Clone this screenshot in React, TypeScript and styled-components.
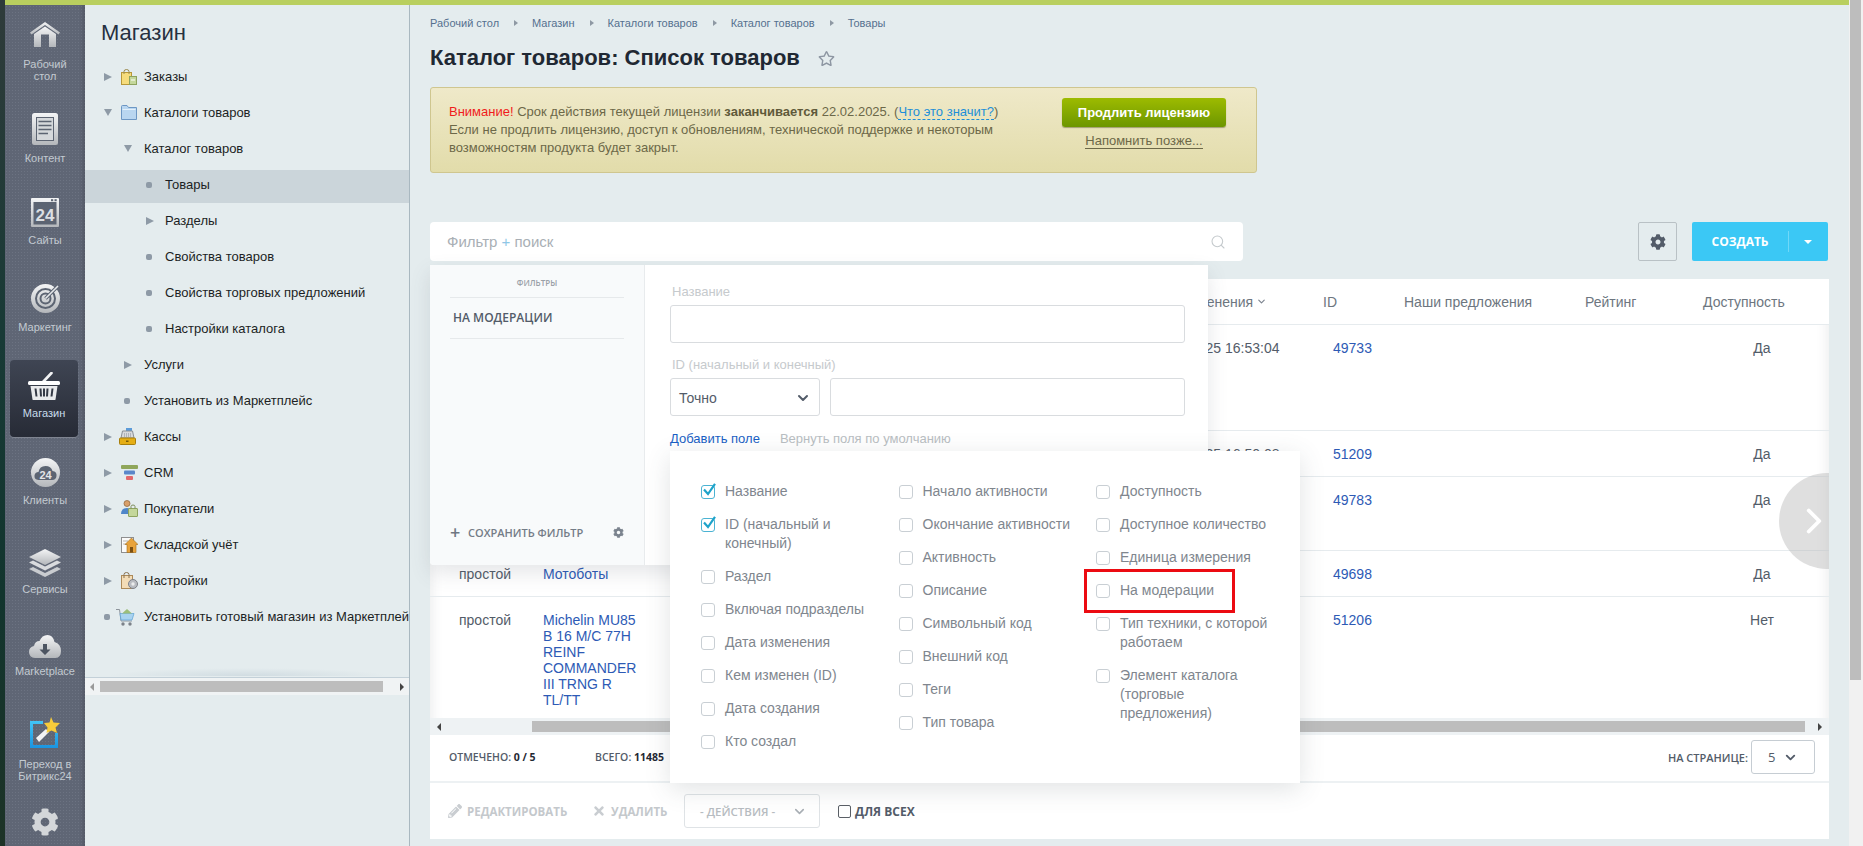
import React from "react"
import styled, { createGlobalStyle } from "styled-components"
import { FaCog, FaPencilAlt, FaRegStar, FaTimes } from "react-icons/fa"
import { ChevronDown, ChevronRight, Search } from "lucide-react"

const GlobalStyle = createGlobalStyle`
  * { box-sizing: border-box; }
  html, body { margin: 0; padding: 0; height: 100%; overflow: hidden; }
  body { font-family: "Liberation Sans", Arial, sans-serif; background: #e4ecee; }
`

const Metal = ({ id }: { id: string }) => (
  <defs>
    <linearGradient id={id} x1="0" y1="0" x2="0" y2="1">
      <stop offset="0" stopColor="#f4f5f6" />
      <stop offset="1" stopColor="#b4b7bb" />
    </linearGradient>
  </defs>
)

const HomeIcon = () => (
  <svg width="30" height="25" viewBox="0 0 30 25">
    <Metal id="m1" />
    <path d="M15 0 30 10.5 28.5 12.5 15 3 1.500 12.500 0 10.500Z" fill="url(#m1)" />
    <path d="M4 12 15 4.500 26 12V25H19V12.500H11V25H4Z" fill="url(#m1)" />
  </svg>
)

const ContentIcon = () => (
  <svg width="26" height="32" viewBox="0 0 26 32">
    <Metal id="m2" />
    <rect width="26" height="32" rx="2.500" fill="url(#m2)" />
    <rect x="4" y="4" width="18" height="24" fill="#5c6472" />
    <rect x="5" y="5" width="16" height="22" fill="#d5d8db" />
    <path d="M6.500 8.500H19.500M6.500 12.500H19.500M6.500 16.500H19.500M6.500 20.500H16" stroke="#5c6472" strokeWidth="1.600" />
  </svg>
)

const SitesIcon = () => (
  <svg width="28" height="29" viewBox="0 0 28 29">
    <Metal id="m3" />
    <rect width="28" height="29" rx="1" fill="url(#m3)" />
    <rect x="2.500" y="4" width="23" height="22.500" fill="#5c6472" />
    <rect x="20" y="1.200" width="2.200" height="2" fill="#5c6472" />
    <rect x="23.500" y="1.200" width="2.200" height="2" fill="#5c6472" />
    <text x="14" y="23" textAnchor="middle" fontFamily="Liberation Sans" fontWeight="700" fontSize="17" fill="#dcdfe2">24</text>
  </svg>
)

const TargetIcon = () => (
  <svg width="29" height="29" viewBox="0 0 29 29">
    <Metal id="m4" />
    <circle cx="14.500" cy="14.500" r="14.500" fill="url(#m4)" />
    <circle cx="14.500" cy="14.500" r="9.500" fill="none" stroke="#5c6472" strokeWidth="2" />
    <circle cx="14.500" cy="14.500" r="5" fill="none" stroke="#5c6472" strokeWidth="2" />
    <path d="M14.500 14.500 26 3" stroke="#5c6472" strokeWidth="3.500" />
    <path d="M14.500 14.500 27 2" stroke="#e6e8ea" strokeWidth="1.600" />
  </svg>
)

const BasketIcon = () => (
  <svg width="32" height="28" viewBox="0 0 32 28">
    <path d="M15 10 23.500 1" stroke="#f2f3f4" strokeWidth="2.600" strokeLinecap="round" />
    <rect y="9" width="32" height="4" rx="1.500" fill="#fff" />
    <path d="M2.500 14H29.500L27.500 27.500Q27.400 28 26.500 28H5.500Q4.600 28 4.500 27.500Z" fill="#e9eaec" />
    <path d="M7.500 16.500 8.500 24.500M12.500 16.500 13 24.500M19.500 16.500 19 24.500M24.500 16.500 23.500 24.500M16 16.500V24.500" stroke="#343945" strokeWidth="2" />
  </svg>
)

const CloudCircleIcon = () => (
  <svg width="29" height="29" viewBox="0 0 29 29">
    <Metal id="m6" />
    <circle cx="14.500" cy="14.500" r="14.500" fill="url(#m6)" />
    <path d="M7.500 22Q3 21.500 3.500 17.500 4 14 7.500 14 8.500 8 14.500 8 20 8 21.500 13 26 13.500 25.500 18 25 22 21 22Z" fill="#5c6472" />
    <text x="14.500" y="20.500" textAnchor="middle" fontFamily="Liberation Sans" fontWeight="700" fontSize="11" fill="#e3e5e7">24</text>
  </svg>
)

const LayersIcon = () => (
  <svg width="32" height="28" viewBox="0 0 32 28">
    <Metal id="m7" />
    <path d="M16 0 32 8 16 16 0 8Z" fill="url(#m7)" />
    <path d="M4 11.500 16 17.500 28 11.500 32 13.500 16 21.500 0 13.500Z" fill="#d9dbde" />
    <path d="M4 18 16 24 28 18 32 20 16 28 0 20Z" fill="#c9ccd0" />
  </svg>
)

const CloudDownIcon = () => (
  <svg width="32" height="23" viewBox="0 0 32 23">
    <Metal id="m8" />
    <path d="M6 23Q0 22.500 0 17 0 12 5 11 6 6 10.500 6 13 0 18.500 0 24 0 25.500 7 32 9 32 16 32 22.500 26.500 23Z" fill="url(#m8)" />
    <path d="M14 9H18V14.500H21.500L16 20 10.500 14.500H14Z" fill="#4c5461" />
  </svg>
)

const WandIcon = () => (
  <svg width="32" height="32" viewBox="0 0 32 32">
    <defs>
      <linearGradient id="m9" x1="0" y1="0" x2="0" y2="1">
        <stop offset="0" stopColor="#43c4f5" />
        <stop offset="1" stopColor="#1a94e0" />
      </linearGradient>
    </defs>
    <path d="M1 4H14V7H4V28H26V16H29V31H1Z" fill="url(#m9)" />
    <path d="M7 21 17 12 20 15 10 25Z" fill="#f2f3f4" />
    <path d="M22 0 24.500 5.500 31 6 26.500 10.500 28 16 22.500 13.500 17.500 16 18.500 10.500 15 6 20.500 5.500Z" fill="#f7cc3a" />
  </svg>
)

const OrdersIcon = () => (
  <svg width="16" height="16" viewBox="0 0 16 16">
    <rect x="0.500" y="3.500" width="10" height="12" fill="#f6dc7c" stroke="#b8993a" />
    <path d="M3 5V2.500Q3 .5 5.500 .5 8 .5 8 2.500V5" fill="none" stroke="#9a8a4e" />
    <rect x="8.500" y="7.500" width="7" height="8" fill="#c4d79b" stroke="#8ea35f" />
    <path d="M10 11H14" stroke="#fff" />
  </svg>
)

const FolderIcon = () => (
  <svg width="16" height="15" viewBox="0 0 16 15">
    <path d="M.5 14.500V1.500Q.5.500 1.500.500H6L7.500 2.500H15.500V14.500Z" fill="#b9d6f0" stroke="#6d97c4" />
    <path d="M1.500 4.500H14.500" stroke="#e3f0fb" />
  </svg>
)

const CashIcon = () => (
  <svg width="17" height="17" viewBox="0 0 17 17">
    <rect x="7" y="0" width="6" height="3" fill="#5c9bd8" />
    <path d="M3.500 3H13.500L15 10H2Z" fill="#d8dadd" stroke="#8a8f96" />
    <path d="M5 6H12M5 8H12" stroke="#8a8f96" strokeDasharray="1 1" />
    <rect x="0.500" y="10" width="16" height="6.500" rx="1" fill="#e5ae15" stroke="#a77f0c" />
    <rect x="7" y="12.500" width="2.500" height="1.500" fill="#7a5c05" />
  </svg>
)

const CrmIcon = () => (
  <svg width="17" height="15" viewBox="0 0 17 15">
    <rect width="17" height="4" rx="1" fill="#8fa65a" />
    <rect x="3" y="5.500" width="11" height="4" rx="1" fill="#5b87c9" />
    <rect x="5" y="11" width="7" height="4" rx="1" fill="#e2686b" />
  </svg>
)

const BuyersIcon = () => (
  <svg width="17" height="17" viewBox="0 0 17 17">
    <circle cx="6" cy="3.500" r="3" fill="#d9a06b" stroke="#8a6034" strokeWidth=".7" />
    <path d="M0 14Q0 8 6 8 11 8 11 14Z" fill="#4f86c9" />
    <rect x="7.500" y="8.500" width="9" height="8" rx=".5" fill="#c4d79b" stroke="#8ea35f" />
    <path d="M10 8.500V6.500Q10 5 12 5 14 5 14 6.500V8.500" fill="none" stroke="#7d8c5a" />
  </svg>
)

const WarehouseIcon = () => (
  <svg width="17" height="17" viewBox="0 0 17 17">
    <rect x="0.500" y="1.500" width="12" height="15" fill="#fbfbfa" stroke="#8f8f8f" />
    <path d="M2 5H7M2 8H6" stroke="#b5b5b5" />
    <path d="M10.500 2 17 8.500H15V16.500H6V8.500H4Z" fill="#e8a33b" stroke="#a26c18" strokeWidth=".6" />
    <rect x="9" y="11" width="3" height="5.500" fill="#7a4f12" />
  </svg>
)

const SettingsShopIcon = () => (
  <svg width="17" height="17" viewBox="0 0 17 17">
    <rect x="0.500" y="3.500" width="11" height="13" fill="#f3dcb6" stroke="#ad8a58" />
    <path d="M3 6V2.500Q3 .5 5.500 .5 8 .5 8 2.500V6" fill="none" stroke="#8a7250" />
    <circle cx="12" cy="12" r="4.500" fill="#b9bcc1" stroke="#7d8087" />
    <circle cx="12" cy="12" r="1.700" fill="#eceded" />
  </svg>
)

const CartIcon = () => (
  <svg width="19" height="18" viewBox="0 0 19 18">
    <path d="M0 1.500H3.500L5 13H16" fill="none" stroke="#8e959c" />
    <path d="M4 5.500H18L16 12H5Z" fill="#a9d3f0" stroke="#5ba2d6" strokeWidth=".7" />
    <path d="M6 5.500 11 1 16 5.500Z" fill="#9cbe7a" />
    <circle cx="7" cy="16" r="1.700" fill="#7c8289" />
    <circle cx="14" cy="16" r="1.700" fill="#7c8289" />
  </svg>
)

const CheckMark = () => (
  <svg width="16" height="16" viewBox="0 0 16 16">
    <path d="M3 6.500 7 11 14 0.800" fill="none" stroke="#1ea3ca" strokeWidth="2.200" />
  </svg>
)

const nav = [
  { label: "Рабочий стол", icon: <HomeIcon />, h: 90, pt: 17, gap: 11 },
  { label: "Контент", icon: <ContentIcon />, h: 90, pt: 18, gap: 7 },
  { label: "Сайты", icon: <SitesIcon />, h: 85, pt: 13, gap: 7 },
  { label: "Маркетинг", icon: <TargetIcon />, h: 85, pt: 14, gap: 8 },
  { label: "Магазин", icon: <BasketIcon />, h: 77, pt: 12, gap: 7, active: true },
  { label: "Клиенты", icon: <CloudCircleIcon />, h: 93, pt: 21, gap: 7 },
  { label: "Сервисы", icon: <LayersIcon />, h: 90, pt: 19, gap: 6 },
  { label: "Marketplace", icon: <CloudDownIcon />, h: 85, pt: 15, gap: 7 },
  { label: "Переход в Битрикс24", icon: <WandIcon />, h: 90, pt: 12, gap: 9 },
]

type MenuEntry = {
  label: string
  marker: "right" | "down" | "dot"
  level: number
  icon?: React.ReactNode
  slot?: number
  active?: boolean
}

const menu: MenuEntry[] = [
  { label: "Заказы", marker: "right", level: 0, icon: <OrdersIcon />, slot: 23 },
  { label: "Каталоги товаров", marker: "down", level: 0, icon: <FolderIcon />, slot: 23 },
  { label: "Каталог товаров", marker: "down", level: 1 },
  { label: "Товары", marker: "dot", level: 2, active: true },
  { label: "Разделы", marker: "right", level: 2 },
  { label: "Свойства товаров", marker: "dot", level: 2 },
  { label: "Свойства торговых предложений", marker: "dot", level: 2 },
  { label: "Настройки каталога", marker: "dot", level: 2 },
  { label: "Услуги", marker: "right", level: 1 },
  { label: "Установить из Маркетплейс", marker: "dot", level: 1 },
  { label: "Кассы", marker: "right", level: 0, icon: <CashIcon />, slot: 25 },
  { label: "CRM", marker: "right", level: 0, icon: <CrmIcon />, slot: 23 },
  { label: "Покупатели", marker: "right", level: 0, icon: <BuyersIcon />, slot: 23 },
  { label: "Складской учёт", marker: "right", level: 0, icon: <WarehouseIcon />, slot: 23 },
  { label: "Настройки", marker: "right", level: 0, icon: <SettingsShopIcon />, slot: 23 },
  { label: "Установить готовый магазин из Маркетплейс", marker: "dot", level: 0, icon: <CartIcon />, slot: 28 },
]

const crumbs = ["Рабочий стол", "Магазин", "Каталоги товаров", "Каталог товаров", "Товары"]

const fieldColumns = [
  [
    { label: "Название", checked: true },
    { label: "ID (начальный и конечный)", checked: true },
    { label: "Раздел" },
    { label: "Включая подразделы" },
    { label: "Дата изменения" },
    { label: "Кем изменен (ID)" },
    { label: "Дата создания" },
    { label: "Кто создал" },
  ],
  [
    { label: "Начало активности" },
    { label: "Окончание активности" },
    { label: "Активность" },
    { label: "Описание" },
    { label: "Символьный код" },
    { label: "Внешний код" },
    { label: "Теги" },
    { label: "Тип товара" },
  ],
  [
    { label: "Доступность" },
    { label: "Доступное количество" },
    { label: "Единица измерения" },
    { label: "На модерации", marked: true },
    { label: "Тип техники, с которой работаем" },
    { label: "Элемент каталога (торговые предложения)" },
  ],
]

const rows = [
  { h: 106, date: "10.02.2025 16:53:04", id: "49733", avail: "Да" },
  { h: 46, date: "10.02.2025 16:50:08", id: "51209", avail: "Да" },
  { h: 74, date: "", id: "49783", avail: "Да" },
  { h: 46, type: "простой", name: "Мотоботы", date: "", id: "49698", avail: "Да" },
  { h: 121, type: "простой", name: "Michelin MU85 B 16 M/C 77H REINF COMMANDER III TRNG R TL/TT", date: "", id: "51206", avail: "Нет", last: true },
]

export default function App() {
  return (
    <Page>
      <GlobalStyle />
      <Wallpaper />
      <Shell>
        <GreenBar />
        <Body>
          <Sidebar>
            {nav.map(({ label, icon, h, pt, gap, active }) => (
              <NavItem key={label} $h={h} $pt={pt} $gap={gap} $active={active}>
                {icon}
                <NavLabel $active={active}>{label}</NavLabel>
              </NavItem>
            ))}
            <NavItem $h={51} $pt={13} $gap={0}>
              <FaCog size={28} color="#d3d6d9" />
            </NavItem>
          </Sidebar>
          <MenuPanel>
            <MenuTitle>Магазин</MenuTitle>
            <MenuList>
              {menu.map(({ label, marker, level, icon, slot, active }) => (
                <MenuRow key={label} $active={active}>
                  <MarkerSlot $level={level} $narrow={slot === 28}>
                    <Marker $kind={marker} />
                  </MarkerSlot>
                  {icon && <IconSlot $w={slot}>{icon}</IconSlot>}
                  <span>{label}</span>
                </MenuRow>
              ))}
            </MenuList>
            <MenuScroll>
              <ScrollArrow $dir="left" $light />
              <MenuThumb />
              <ScrollArrow $dir="right" />
            </MenuScroll>
          </MenuPanel>
          <Main>
            <Breadcrumbs>
              {crumbs.map((c, i) => (
                <Crumb key={c} $first={i === 0}>
                  {c}
                </Crumb>
              ))}
            </Breadcrumbs>
            <TitleRow>
              <Title>Каталог товаров: Список товаров</Title>
              <FaRegStar size={17} color="#8d96a2" />
            </TitleRow>
            <Banner>
              <BannerText>
                <Warn>Внимание!</Warn> Срок действия текущей лицензии <b>заканчивается</b> 22.02.2025. (
                <Hint>Что это значит?</Hint>)<br />
                Если не продлить лицензию, доступ к обновлениям, технической поддержке и некоторым
                <br />
                возможностям продукта будет закрыт.
              </BannerText>
              <BannerActions>
                <RenewButton>Продлить лицензию</RenewButton>
                <Later>Напомнить позже...</Later>
              </BannerActions>
            </Banner>
            <Toolbar>
              <SearchBox>
                <Placeholder>
                  Фильтр <i>+</i> поиск
                </Placeholder>
                <Search size={16} color="#c5cacd" strokeWidth={1.6} />
                <FilterPopup>
                  <SavedPane>
                    <PaneCaption>Фильтры</PaneCaption>
                    <SavedItem>На модерации</SavedItem>
                    <SaveRow>
                      <PlusMark>+</PlusMark>
                      <span>Сохранить фильтр</span>
                      <FaCog size={11} color="#7b838e" />
                    </SaveRow>
                  </SavedPane>
                  <FormPane>
                    <FieldLabel>Название</FieldLabel>
                    <TextInput />
                    <FieldLabel $spaced>ID (начальный и конечный)</FieldLabel>
                    <RangeRow>
                      <SelectBox>
                        Точно
                        <ChevronDown size={16} strokeWidth={3} color="#535c69" />
                      </SelectBox>
                      <TextInput />
                    </RangeRow>
                    <LinksRow>
                      <AddLink>Добавить поле</AddLink>
                      <ResetLink>Вернуть поля по умолчанию</ResetLink>
                    </LinksRow>
                  </FormPane>
                  <FieldsPopup>
                    {fieldColumns.map((col, i) => (
                      <FieldColumn key={i}>
                        {col.map(({ label, checked, marked }: any) => (
                          <FieldItem key={label} $marked={marked}>
                            <Box $checked={checked}>{checked && <CheckMark />}</Box>
                            <FieldText>{label}</FieldText>
                          </FieldItem>
                        ))}
                      </FieldColumn>
                    ))}
                  </FieldsPopup>
                </FilterPopup>
              </SearchBox>
              <GearButton>
                <FaCog size={16} color="#535c69" />
              </GearButton>
              <CreateButton>
                <CreateLabel>Создать</CreateLabel>
                <CreateCaret />
              </CreateButton>
            </Toolbar>
            <Card>
              <TableArea>
                <HeadRow>
                  <HeadCell />
                  <HeadCell />
                  <HeadCell $pad={7}>
                    Дата изменения <ChevronDown size={11} strokeWidth={2.500} color="#7b838e" />
                  </HeadCell>
                  <HeadCell>ID</HeadCell>
                  <HeadCell>Наши предложения</HeadCell>
                  <HeadCell>Рейтинг</HeadCell>
                  <HeadCell>Доступность</HeadCell>
                </HeadRow>
                {rows.map((r) => (
                  <DataRow key={r.id} $h={r.h} $last={r.last}>
                    <TypeCell>{r.type}</TypeCell>
                    <NameCell>{r.name}</NameCell>
                    <DateCell>{r.date}</DateCell>
                    <IdCell>{r.id}</IdCell>
                    <span />
                    <span />
                    <AvailCell>{r.avail}</AvailCell>
                  </DataRow>
                ))}
                <NextCircle>
                  <ChevronRight size={42} color="#fff" strokeWidth={2.200} />
                </NextCircle>
              </TableArea>
              <TableScroll>
                <ScrollArrow $dir="left" />
                <TableThumb />
                <ScrollArrow $dir="right" />
              </TableScroll>
              <Footer>
                <Stat>
                  Отмечено: <b>0 / 5</b>
                </Stat>
                <Stat>
                  Всего: <b>11485</b>
                </Stat>
                <PerPage>
                  На странице:
                  <PerPageSelect>
                    5
                    <ChevronDown size={15} strokeWidth={3} color="#535c69" />
                  </PerPageSelect>
                </PerPage>
              </Footer>
              <Actions>
                <ActionLink $w={144}>
                  <FaPencilAlt size={14} color="#c9cdd1" />
                  Редактировать
                </ActionLink>
                <ActionLink $w={92}>
                  <FaTimes size={14} color="#c9cdd1" />
                  Удалить
                </ActionLink>
                <ActionSelect>
                  - Действия -
                  <ChevronDown size={15} strokeWidth={2.500} color="#a9afb5" />
                </ActionSelect>
                <ForAll>
                  <PlainBox />
                  Для всех
                </ForAll>
              </Actions>
            </Card>
          </Main>
        </Body>
      </Shell>
      <PageScroll>
        <PageThumb />
      </PageScroll>
    </Page>
  )
}

const Page = styled.div`
  display: flex;
  width: 1863px;
  height: 846px;
  overflow: hidden;
`

const Wallpaper = styled.div`
  width: 5px;
  background: linear-gradient(180deg, #2f3b3a 0%, #183a36 40%, #12352e 70%, #1d3327 100%);
`

const Shell = styled.div`
  flex: 1;
  display: flex;
  flex-direction: column;
  min-width: 0;
`

const GreenBar = styled.div`
  height: 5px;
  background: #b9cf5f;
`

const Body = styled.div`
  flex: 1;
  display: flex;
  min-height: 0;
  background: #e4ecee;
`

const Sidebar = styled.nav`
  width: 80px;
  flex-shrink: 0;
  background-color: #5f6675;
  background-image: radial-gradient(#6c7382 0.8px, transparent 1px);
  background-size: 3px 3px;
  box-shadow: inset -5px 0 5px -4px rgba(0, 0, 0, 0.2);
`

const NavItem = styled.div<{ $h: number; $pt: number; $gap: number; $active?: boolean }>`
  display: flex;
  flex-direction: column;
  align-items: center;
  gap: ${(p) => p.$gap}px;
  height: ${(p) => p.$h}px;
  padding-top: ${(p) => p.$pt}px;
  ${(p) =>
    p.$active &&
    `
    width: 68px;
    margin: 5px 0 0 5px;
    border-radius: 4px;
    background: linear-gradient(180deg, #3f4553 0%, #272b36 100%);
    box-shadow: 0 1px 0 rgba(255, 255, 255, 0.2);
  `}
  svg { flex-shrink: 0; }
`

const NavLabel = styled.div<{ $active?: boolean }>`
  width: 64px;
  font-size: 11px;
  line-height: 12px;
  text-align: center;
  color: ${(p) => (p.$active ? "#c8dcec" : "#c3cad1")};
`

const MenuPanel = styled.div`
  width: 325px;
  flex-shrink: 0;
  border-right: 1px solid #a9b8c0;
  background: #e4ecee;
`

const MenuTitle = styled.div`
  padding: 14px 0 0 16px;
  height: 57px;
  font-size: 22px;
  line-height: 28px;
  color: #263040;
`

const MenuList = styled.div`
  height: 614px;
  overflow: hidden;
  display: flex;
  flex-direction: column;
  gap: 3px;
  background: radial-gradient(ellipse 140px 8px at 50% 100%, rgba(130, 155, 175, 0.2), transparent);
`

const MenuRow = styled.div<{ $active?: boolean }>`
  display: flex;
  align-items: center;
  flex-shrink: 0;
  height: 33px;
  padding-bottom: 4px;
  white-space: nowrap;
  font-size: 13px;
  color: #1c1f24;
  background: ${(p) => (p.$active ? "#cbd5da" : "transparent")};
`

const MarkerSlot = styled.div<{ $level: number; $narrow?: boolean }>`
  flex-shrink: 0;
  display: flex;
  align-items: center;
  margin-left: ${(p) => [19, 39, 61][p.$level]}px;
  width: ${(p) => (p.$narrow ? 12 : [17, 20, 19][p.$level])}px;
`

const Marker = styled.i<{ $kind: string }>`
  display: block;
  ${(p) =>
    p.$kind === "dot"
      ? `
    width: 6px; height: 6px; border-radius: 2px; background: #8e9aa6;
  `
      : p.$kind === "down"
      ? `
    border-style: solid; border-width: 7px 4.500px 0; border-color: #8e9aa6 transparent transparent;
  `
      : `
    border-style: solid; border-width: 4.750px 0 4.750px 8px; border-color: transparent transparent transparent #8e9aa6;
  `}
`

const IconSlot = styled.div<{ $w?: number }>`
  flex-shrink: 0;
  display: flex;
  align-items: center;
  width: ${(p) => p.$w}px;
  margin-left: ${(p) => (p.$w === 25 ? -2 : 0)}px;
`

const MenuScroll = styled.div`
  display: flex;
  align-items: center;
  height: 18px;
  margin-top: 1px;
  border-top: 1px solid #c3d0d8;
  padding: 0 5px;
  background: #f0f3f4;
`

const MenuThumb = styled.div`
  width: 283px;
  height: 11px;
  margin: 0 auto 0 6px;
  background: #bdbdbd;
`

const ScrollArrow = styled.i<{ $dir: "left" | "right"; $light?: boolean }>`
  display: block;
  border-style: solid;
  border-width: ${(p) => (p.$dir === "left" ? "4px 4px 4px 0" : "4px 0 4px 4px")};
  border-color: transparent;
  ${(p) => (p.$dir === "left" ? "border-right-color" : "border-left-color")}: ${(p) => (p.$light ? "#9a9a9a" : "#444")};
`

const Main = styled.main`
  flex: 1;
  min-width: 0;
  padding: 11px 20px 0;
`

const Breadcrumbs = styled.div`
  display: flex;
  height: 14px;
  align-items: center;
`

const Crumb = styled.span<{ $first?: boolean }>`
  font-size: 11px;
  color: #55708f;
  position: relative;
  margin-left: ${(p) => (p.$first ? 0 : 33)}px;
  ${(p) =>
    !p.$first &&
    `
    &::before {
      content: "";
      position: absolute;
      left: -18px;
      top: 3px;
      border-style: solid;
      border-width: 3.500px 0 3.500px 4px;
      border-color: transparent transparent transparent #8e98a3;
    }
  `}
`

const TitleRow = styled.div`
  display: flex;
  align-items: center;
  gap: 18px;
  height: 26px;
  margin-top: 15px;
`

const Title = styled.h1`
  margin: 0;
  font-size: 22px;
  font-weight: 700;
  color: #1f2833;
`

const Banner = styled.div`
  display: flex;
  justify-content: space-between;
  width: 827px;
  height: 86px;
  margin-top: 16px;
  padding: 0 30px 0 18px;
  border: 1px solid #cfc68f;
  border-radius: 3px;
  background: linear-gradient(180deg, #efe9c9 0%, #e2dcaa 100%);
`

const BannerText = styled.div`
  padding-top: 15px;
  font-size: 13px;
  line-height: 18px;
  color: #6c6848;
  white-space: nowrap;
  b { color: #5f5a3a; }
`

const Warn = styled.span`
  color: #f01c1c;
`

const Hint = styled.span`
  color: #1e8fd8;
  border-bottom: 1px dashed #1e8fd8;
`

const BannerActions = styled.div`
  display: flex;
  flex-direction: column;
  align-items: center;
  width: 164px;
  padding-top: 10px;
`

const RenewButton = styled.div`
  width: 164px;
  height: 29px;
  line-height: 29px;
  border-radius: 3px;
  text-align: center;
  font-size: 13px;
  font-weight: 700;
  color: #fff;
  background: linear-gradient(180deg, #9dbb00 0%, #6c9600 100%);
  box-shadow: 0 1px 1px rgba(90, 90, 40, 0.5);
`

const Later = styled.span`
  margin-top: 6px;
  font-size: 13px;
  line-height: 15px;
  color: #6c6848;
  border-bottom: 1px solid #6c6848;
`

const Toolbar = styled.div`
  display: flex;
  align-items: stretch;
  height: 39px;
  margin-top: 49px;
`

const SearchBox = styled.div`
  position: relative;
  z-index: 2;
  display: flex;
  align-items: center;
  justify-content: space-between;
  width: 813px;
  padding: 0 17px;
  border-radius: 4px;
  background: #fff;
`

const Placeholder = styled.span`
  font-size: 15px;
  color: #a9afb5;
  i { font-style: normal; color: #8fc6e6; }
`

const FilterPopup = styled.div`
  position: absolute;
  left: 0;
  top: calc(100% + 4px);
  display: flex;
  width: 778px;
  height: 300px;
  background: #fff;
  border-radius: 0 0 4px 4px;
  box-shadow: 0 8px 20px rgba(80, 90, 100, 0.15);
`

const SavedPane = styled.div`
  display: flex;
  flex-direction: column;
  width: 215px;
  padding: 13px 20px 26px;
  border-right: 1px solid #e8ebed;
  background: #f8fafb;
  border-radius: 0 0 0 4px;
`

const PaneCaption = styled.div`
  height: 20px;
  line-height: 10px;
  border-bottom: 1px solid #e6e9eb;
  text-align: center;
  text-transform: uppercase;
  font-family: "Open Sans", sans-serif;
  font-size: 8px;
  font-weight: 600;
  color: #9aa1a8;
`

const SavedItem = styled.div`
  height: 41px;
  padding-left: 3px;
  line-height: 39px;
  border-bottom: 1px solid #e6e9eb;
  text-transform: uppercase;
  font-family: "Open Sans", sans-serif;
  font-size: 12px;
  font-weight: 600;
  color: #535c69;
`

const SaveRow = styled.div`
  display: flex;
  align-items: center;
  margin-top: auto;
  height: 14px;
  font-family: "Open Sans", sans-serif;
  font-size: 11px;
  font-weight: 600;
  text-transform: uppercase;
  color: #747c87;
  span { flex: 1; }
`

const PlusMark = styled.i`
  font-style: normal;
  width: 18px;
  font-size: 18px;
  font-weight: 600;
  color: #6f7782;
  && { flex: none; }
`

const FormPane = styled.div`
  flex: 1;
  padding: 19px 23px 0 25px;
`

const FieldLabel = styled.div<{ $spaced?: boolean }>`
  height: 16px;
  margin: ${(p) => (p.$spaced ? "14px 0 5px" : "0 0 5px")};
  padding-left: 2px;
  font-size: 13px;
  line-height: 16px;
  color: #c6cacd;
`

const TextInput = styled.div`
  flex: 1;
  height: 38px;
  border: 1px solid #d9dcdf;
  border-radius: 3px;
`

const RangeRow = styled.div`
  display: flex;
  gap: 10px;
`

const SelectBox = styled.div`
  display: flex;
  align-items: center;
  justify-content: space-between;
  width: 150px;
  height: 38px;
  padding: 1px 8px 0;
  border: 1px solid #d9dcdf;
  border-radius: 3px;
  font-size: 14px;
  color: #535c69;
`

const LinksRow = styled.div`
  display: flex;
  gap: 20px;
  margin-top: 15px;
  font-size: 13px;
  line-height: 16px;
`

const AddLink = styled.span`
  color: #1a5fc4;
`

const ResetLink = styled.span`
  color: #b9bec2;
`

const FieldsPopup = styled.div`
  position: absolute;
  left: 240px;
  top: 186px;
  display: grid;
  grid-template-columns: repeat(3, 197.500px);
  align-content: start;
  width: 630px;
  height: 332px;
  padding: 31px 0 0 31px;
  background: #fff;
  box-shadow: 0 6px 24px rgba(70, 80, 90, 0.16);
`

const FieldColumn = styled.div`
  display: flex;
  flex-direction: column;
  gap: 14px;
`

const FieldItem = styled.div<{ $marked?: boolean }>`
  position: relative;
  display: flex;
  gap: 10px;
  font-size: 14px;
  line-height: 19px;
  color: #80868e;
  ${(p) =>
    p.$marked &&
    `
    &::after {
      content: "";
      box-sizing: border-box;
      position: absolute;
      left: -12px;
      top: -12px;
      width: 151px;
      height: 44px;
      border: 3px solid #ec0b12;
    }
  `}
`

const FieldText = styled.span`
  max-width: 152px;
`

const Box = styled.span<{ $checked?: boolean }>`
  position: relative;
  flex-shrink: 0;
  width: 14px;
  height: 14px;
  margin-top: 3px;
  border: 1px solid ${(p) => (p.$checked ? "#4bb3d3" : "#c9cfd4")};
  border-radius: 3px;
  background: #fff;
  svg {
    position: absolute;
    left: -1px;
    top: -3px;
  }
`

const GearButton = styled.div`
  display: flex;
  align-items: center;
  justify-content: center;
  width: 39px;
  margin-left: 395px;
  border: 1px solid #b9c1c5;
  border-radius: 2px;
`

const CreateButton = styled.div`
  display: flex;
  align-items: center;
  width: 136px;
  margin-left: 15px;
  border-radius: 2px;
  background: #3bc8f5;
`

const CreateLabel = styled.div`
  width: 97px;
  height: 21px;
  line-height: 21px;
  border-right: 1px solid #6fd8f8;
  text-align: center;
  text-transform: uppercase;
  font-family: "Open Sans", sans-serif;
  font-size: 12px;
  font-weight: 700;
  color: #fff;
`

const CreateCaret = styled.i`
  margin-left: 15px;
  border-style: solid;
  border-width: 4px 4px 0;
  border-color: #fff transparent transparent;
`

const Card = styled.section`
  height: 560px;
  margin-top: 18px;
  background: #fff;
`

const TableArea = styled.div`
  position: relative;
  box-shadow: inset 14px 0 12px -12px rgba(60, 70, 80, 0.1), inset -14px 0 12px -12px rgba(60, 70, 80, 0.1);
`

const columns = "113px 598px 172px 81px 181px 118px 136px"

const HeadRow = styled.div`
  display: grid;
  grid-template-columns: ${columns};
  align-items: center;
  height: 46px;
  border-bottom: 1px solid #e6ebee;
  background: #fff;
`

const HeadCell = styled.div<{ $pad?: number }>`
  display: flex;
  align-items: center;
  gap: 3px;
  padding-left: ${(p) => p.$pad ?? 10}px;
  font-size: 14px;
  color: #6d7680;
`

const DataRow = styled.div<{ $h: number; $last?: boolean }>`
  display: grid;
  grid-template-columns: ${columns};
  height: ${(p) => p.$h}px;
  padding-top: 15px;
  font-size: 14px;
  line-height: 16px;
  color: #535c69;
  border-bottom: ${(p) => (p.$last ? "none" : "1px solid #e6ebee")};
`

const TypeCell = styled.div`
  padding-left: 29px;
`

const NameCell = styled.div`
  max-width: 96px;
  color: #2d5ab5;
`

const DateCell = styled.div`
  padding-left: 10px;
  white-space: nowrap;
`

const IdCell = styled.div`
  padding-left: 20px;
  color: #2d5ab5;
`

const AvailCell = styled.div`
  padding-left: 2px;
  text-align: center;
`

const NextCircle = styled.div`
  position: absolute;
  right: 0;
  top: 194px;
  display: flex;
  align-items: center;
  justify-content: flex-start;
  width: 50px;
  height: 96px;
  padding-left: 14px;
  border-radius: 48px 0 0 48px;
  background: rgba(185, 185, 185, 0.45);
  svg { flex-shrink: 0; }
`

const TableScroll = styled.div`
  display: flex;
  align-items: center;
  height: 17px;
  padding: 0 7px;
  background: #eef2f4;
`

const TableThumb = styled.div`
  width: 1273px;
  height: 11px;
  margin-left: 91px;
  margin-right: auto;
  background: #bdbdbd;
`

const Footer = styled.div`
  display: flex;
  align-items: center;
  height: 48px;
  padding: 0 14px 2px 19px;
  border-bottom: 2px solid #edf1f3;
  font-family: "Open Sans", sans-serif;
  font-size: 10.500px;
  font-weight: 600;
  text-transform: uppercase;
  color: #535c69;
`

const Stat = styled.div`
  width: 146px;
  b { color: #1f2833; font-weight: 700; }
`

const PerPage = styled.div`
  display: flex;
  align-items: center;
  gap: 3px;
  margin-left: auto;
  font-size: 11px;
`

const PerPageSelect = styled.div`
  display: flex;
  align-items: center;
  justify-content: space-between;
  width: 64px;
  height: 34px;
  padding: 0 16px 0 16px;
  border: 1px solid #c6cdd3;
  border-radius: 3px;
  font-size: 13px;
  font-weight: 400;
`

const Actions = styled.div`
  display: flex;
  align-items: center;
  height: 56px;
  padding-left: 18px;
`

const ActionLink = styled.div<{ $w: number }>`
  display: flex;
  align-items: center;
  gap: 5px;
  width: ${(p) => p.$w}px;
  font-family: "Open Sans", sans-serif;
  font-size: 11.500px;
  font-weight: 700;
  text-transform: uppercase;
  color: #c4c8cc;
`

const ActionSelect = styled.div`
  display: flex;
  align-items: center;
  justify-content: space-between;
  width: 136px;
  height: 34px;
  padding: 0 12px 0 15px;
  border: 1px solid #dfe3e6;
  border-radius: 3px;
  font-family: "Open Sans", sans-serif;
  font-size: 11.500px;
  font-weight: 600;
  text-transform: uppercase;
  color: #b7bcc1;
`

const ForAll = styled.div`
  display: flex;
  align-items: center;
  gap: 4px;
  margin-left: 18px;
  font-family: "Open Sans", sans-serif;
  font-size: 12px;
  font-weight: 700;
  text-transform: uppercase;
  color: #535c69;
`

const PlainBox = styled.span`
  width: 13px;
  height: 13px;
  border: 1px solid #5a5f66;
  border-radius: 2px;
`

const PageScroll = styled.div`
  width: 14px;
  padding: 0 2px 0 1px;
  background: #f1f1f1;
`

const PageThumb = styled.div`
  height: 680px;
  background: #bdbdbd;
`
